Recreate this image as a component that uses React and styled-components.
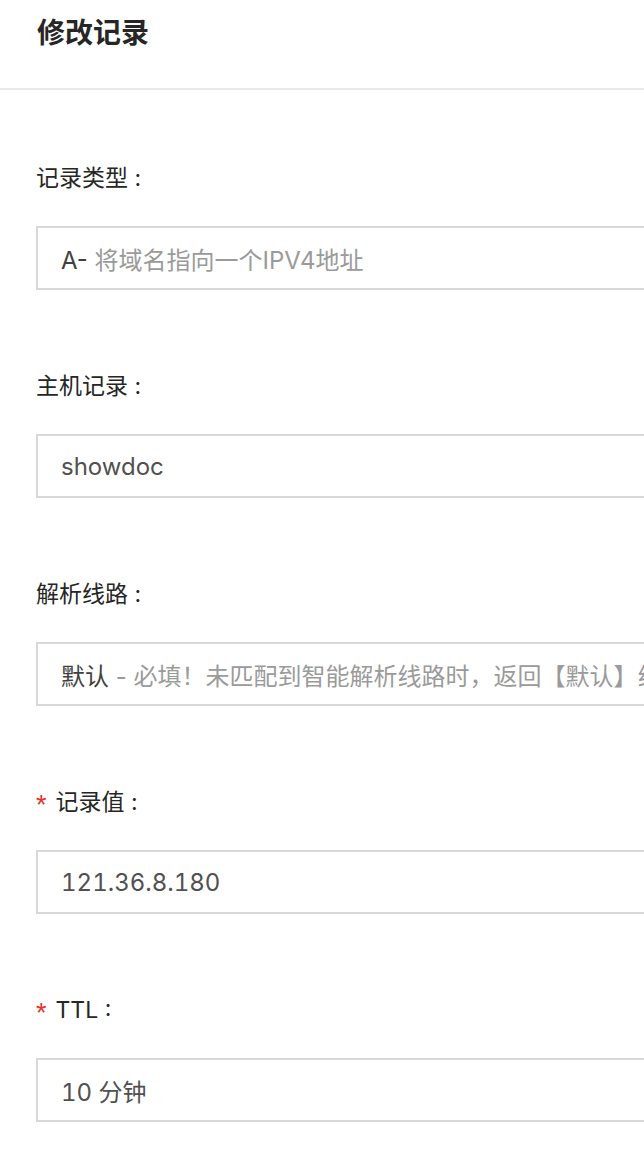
import React from 'react';
import styled, { createGlobalStyle } from "styled-components";

const GlobalStyle = createGlobalStyle`
    html, body {
        margin: 0;
        padding: 0;
        background: #ffffff;
        overflow: hidden;
    }
    body {
        font-family: Inter, "Noto Sans CJK SC", sans-serif;
    }
`;

const fields = [
    { label: '记录类型 :', lead: 'A-', rest: ' 将域名指向一个IPV4地址' },
    { label: '主机记录 :', value: 'showdoc' },
    { label: '解析线路 :', lead: '默认', rest: ' - 必填！未匹配到智能解析线路时，返回【默认】线路设置结果' },
    { label: '记录值 :', value: '121.36.8.180', required: true },
    { label: 'TTL :', value: '10 分钟', required: true },
];

function App() {
    return (
        <Page>
            <GlobalStyle />
            <Header>
                <Title>修改记录</Title>
            </Header>
            <Form>
                {fields.map((f) => (
                    <Field key={f.label}>
                        <Label>
                            {f.required && <Star>*</Star>}
                            {f.label}
                        </Label>
                        <Box>
                            {f.value ? (
                                <Value $numeric>{f.value}</Value>
                            ) : (
                                <Value>
                                    <Lead>{f.lead}</Lead>
                                    <Hint>{f.rest}</Hint>
                                </Value>
                            )}
                        </Box>
                    </Field>
                ))}
            </Form>
        </Page>
    );
}

export default App;

const Page = styled.div`
    width: 760px;
    min-height: 1164px;
    background: #ffffff;
`;

const Header = styled.div`
    height: 88px;
    padding-left: 37px;
    display: flex;
    align-items: center;
    border-bottom: 2px solid #e6e9ed;
    box-sizing: content-box;
`;

const Title = styled.h1`
    margin: 0;
    margin-top: -26px;
    font-size: 28px;
    font-weight: 700;
    color: #262626;
    font-family: "Noto Sans CJK SC", sans-serif;
`;

const Form = styled.div`
    display: flex;
    flex-direction: column;
    gap: 81px;
    padding: 73px 0 0 36px;
`;

const Field = styled.div`
    display: flex;
    flex-direction: column;
    gap: 33px;
`;

const Label = styled.div`
    height: 30px;
    line-height: 30px;
    font-size: 23px;
    color: #262626;
    font-family: Inter, "Noto Sans CJK SC", sans-serif;
    display: flex;
    align-items: center;
    white-space: pre;
`;

const Star = styled.span`
    color: #e4342b;
    font-size: 27px;
    font-family: "Liberation Sans", sans-serif;
    margin-right: 9px;
    margin-top: 6px;
`;

const Box = styled.div`
    height: 64px;
    box-sizing: border-box;
    border: 2px solid #d8d8d8;
    padding: 0 23px;
    display: flex;
    align-items: center;
    overflow: hidden;
`;

const Value = styled.div`
    font-size: 24px;
    color: #505050;
    white-space: pre;
    font-variant-numeric: ${props => props.$numeric ? 'tabular-nums' : 'normal'};
    font-family: Inter, "Noto Sans CJK SC", sans-serif;
`;

const Lead = styled.span`
    color: #404040;
`;

const Hint = styled.span`
    color: #9a9a9a;
`;
